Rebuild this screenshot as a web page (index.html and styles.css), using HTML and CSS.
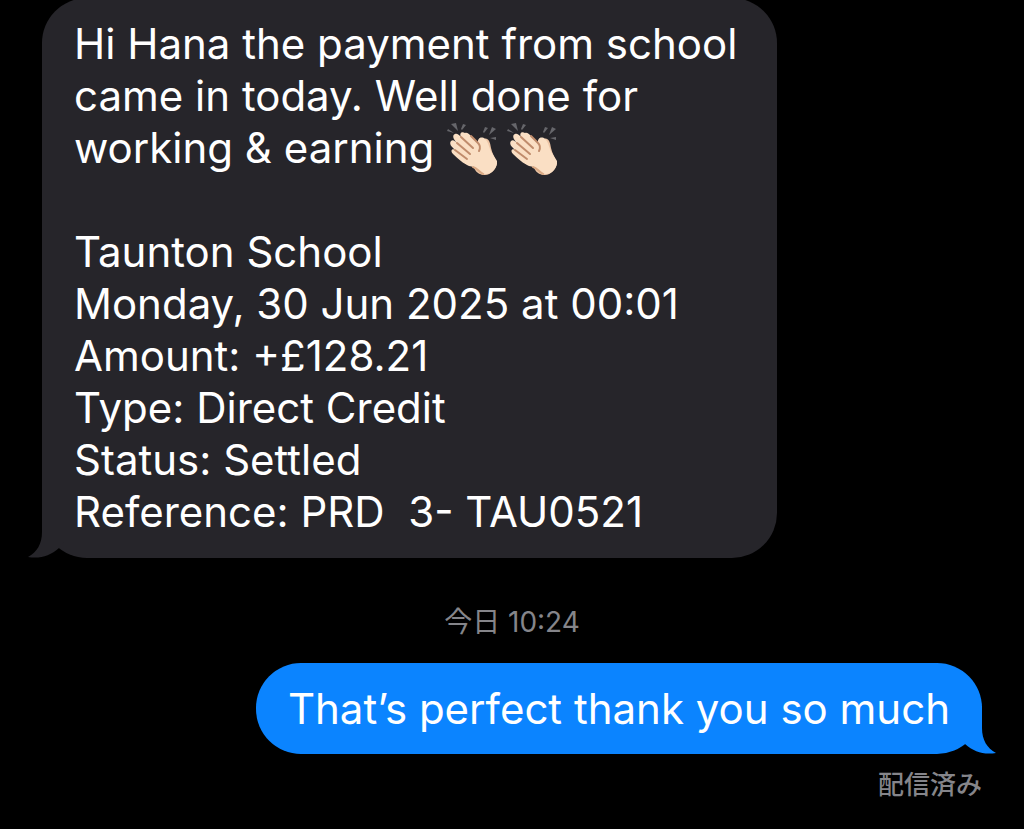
FILE: index.html
```
<!DOCTYPE html>
<html lang="ja">
<head>
    <meta charset="UTF-8">
    <meta name="viewport" content="width=device-width, initial-scale=1.0">
    <title>Messages</title>
    <link rel="stylesheet" href="styles.css">
</head>
<body>

    <!-- Shared shapes -->
    <svg class="defs" width="0" height="0" aria-hidden="true">
        <symbol id="tail" viewBox="0 0 40 48">
            <path d="M14 0V22C14 34 9 42 0 47C12 49 22 46 31 38L36 32V0Z" fill="currentColor"/>
        </symbol>
        <symbol id="clap" viewBox="0 0 52 54">
            <g fill="#66666b">
                <path d="M5 2L10 1L12 9Z"/>
                <path d="M17 2L20 3L16 8L15 7Z"/>
                <path d="M1 9L2 7L8 11Z"/>
                <path d="M39 5L42 6L38 11L37 10Z"/>
                <path d="M46 5L50 7L43 13Z"/>
                <path d="M44 16L50 15V18Z"/>
            </g>
            <path d="M28 46C31 52 35 53 39 53C45 53 50 47 51 41C49 36 46 31 45 26C44 19 42 15 37 17C34 18 35 23 35 26Z" fill="#edc5a5"/>
            <path d="M32 21C31 16 36 14 39 17C43 20 43 27 46 31L51 39C52 46 45 53 39 52C33 50 30 45 23 44C18 42 11 36 7 32C4 29 6 26 9 28C5 24 3 22 5 19C7 17 9 19 11 21C7 17 6 13 9 12C11 11 13 13 15 15C13 11 16 9 19 11C21 10 23 12 25 14Z" fill="#fadfc4"/>
            <path d="M15 15L27 26M11 21L24 32M9 28L21 37M25 14L32 21C35 24 34 27 33 29" fill="none" stroke="#c08c6c" stroke-width="2" stroke-linecap="round"/>
            <path d="M27 45C31 46 33 50 37 52" fill="none" stroke="#d9a984" stroke-width="2" stroke-linecap="round"/>
        </symbol>
    </svg>

    <main class="chat">
        <div class="bubble received">
            <p>Hi Hana the payment from school<br>
            came in today. Well done for<br>
            working &amp; earning <svg class="emoji" role="img" aria-label="clapping hands"><use href="#clap"/></svg><svg class="emoji" role="img" aria-label="clapping hands"><use href="#clap"/></svg></p>
            <p class="details">Taunton School<br>
            Monday, 30 Jun 2025 at 00:01<br>
            Amount: +£128.21<br>
            Type: Direct Credit<br>
            Status: Settled<br>
            Reference: PRD&nbsp; 3- TAU0521</p>
            <svg class="tail" aria-hidden="true"><use href="#tail"/></svg>
        </div>

        <time class="timestamp">今日 10:24</time>

        <div class="bubble sent">
            <p>That’s perfect thank you so much</p>
            <svg class="tail" aria-hidden="true"><use href="#tail"/></svg>
        </div>

        <div class="status">配信済み</div>
    </main>

</body>
</html>
```
FILE: styles.css
```
* { margin: 0; padding: 0; box-sizing: border-box; }

body {
    font-family: Inter, "Noto Sans CJK JP", sans-serif;
    min-height: 100vh;
    background-color: #000;
    color: #fff;
}

.defs { position: absolute; }

.chat {
    display: flex;
    flex-direction: column;
    margin-top: -2px;
    padding: 0 42px;
}

.bubble {
    position: relative;
    border-radius: 45px;
    padding: 20px 32px;
    font-size: 42px;
    line-height: 52px;
}

.received {
    align-self: flex-start;
    padding-right: 40px;
    background-color: #26252a;
    color: #fff;
}

.sent {
    align-self: flex-end;
    padding-bottom: 19px;
    background-color: #0b84ff;
}

.details { margin-top: 52px; }

.emoji {
    width: 52px;
    height: 54px;
    margin: -4px 8px -4px 0;
    vertical-align: -9px;
}

/* Bubble tails */
.tail {
    position: absolute;
    bottom: 0;
    left: -14px;
    width: 40px;
    height: 48px;
}

.received .tail { color: #26252a; }

.sent .tail {
    left: auto;
    right: -14px;
    color: #0b84ff;
    transform: scaleX(-1);
}

.timestamp {
    margin: 44px 0 21px;
    font-size: 28px;
    line-height: 40px;
    text-align: center;
    color: #85858a;
}

.status {
    margin-top: 11px;
    font-size: 26px;
    font-weight: 500;
    line-height: 40px;
    text-align: right;
    color: #85858a;
}
```
